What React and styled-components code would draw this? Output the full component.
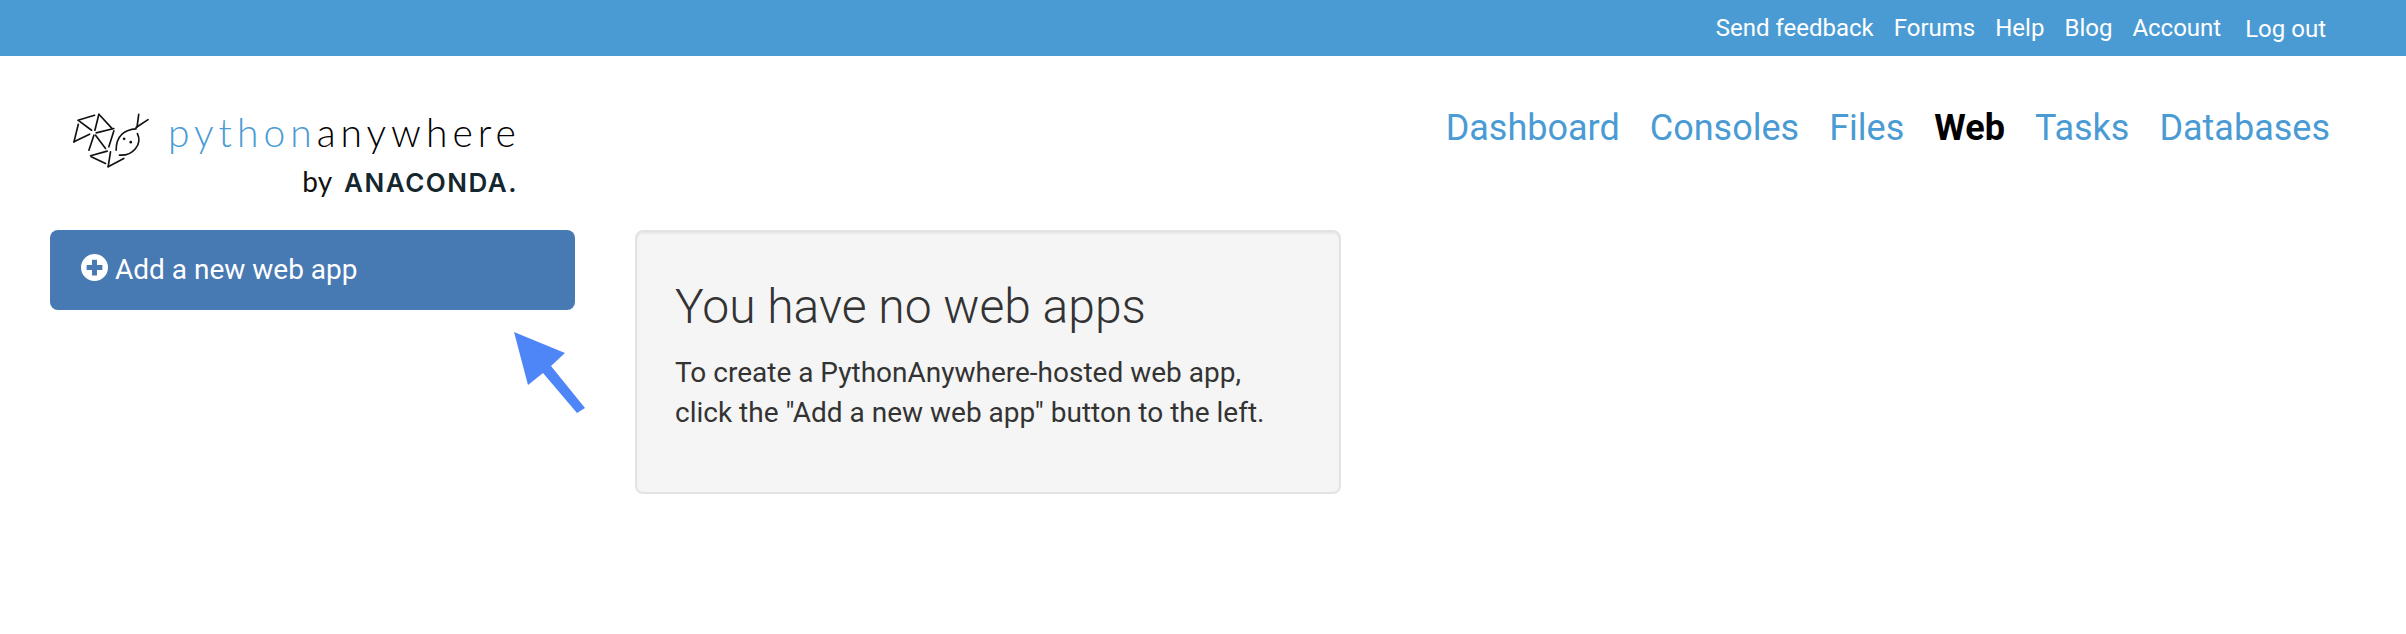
import React from "react";
import styled, {createGlobalStyle} from "styled-components";

const GlobalStyle = createGlobalStyle`
  html, body {
    margin: 0;
    padding: 0;
    background: #fff;
    font-family: Roboto, "Liberation Sans", sans-serif;
    color: #333;
  }
`;

const Page = styled.div`
  position: relative;
  height: 634px;
  overflow: hidden;
`;

const TopBar = styled.div`
  height: 56px;
  background: #4a9bd4;
  display: flex;
  justify-content: flex-end;
  align-items: center;
  padding-right: 80px;
`;

const TopLink = styled.a`
  color: #fff;
  font-size: 24px;
  line-height: 28px;
  margin-left: ${props => props.$gap || 20}px;
  transform: translateY(${props => props.$drop || 0}px);
`;

const Header = styled.div`
  display: flex;
  justify-content: space-between;
  align-items: flex-start;
  height: 174px;
  padding: 0 76px 0 69px;
`;

const Logo = styled.div`
  display: flex;
  flex-direction: column;
  width: 449px;
  padding-top: 51px;
`;

const LogoRow = styled.div`
  display: flex;
  align-items: flex-start;
`;

const LogoIcon = styled.svg`
  width: 83px;
  height: 67px;
  flex: none;
  margin-top: 3px;
`;

const LogoWord = styled.div`
  font-family: Lato, sans-serif;
  font-weight: 300;
  font-size: 39px;
  line-height: 44px;
  letter-spacing: 5px;
  margin: 3px 0 0 16px;
  color: #000;
  white-space: nowrap;

  span {
    color: #4a9bd4;
  }
`;

const LogoBy = styled.div`
  display: flex;
  justify-content: flex-end;
  align-items: baseline;
  gap: 12px;
  margin-top: -12px;
  color: #14262e;
`;

const ByText = styled.span`
  font-family: Lato, sans-serif;
  font-weight: 400;
  font-size: 28px;
  line-height: 32px;
  color: #111;
`;

const Anaconda = styled.span`
  font-family: Inter, sans-serif;
  font-weight: 600;
  font-size: 26px;
  letter-spacing: 1.5px;
  line-height: 32px;
`;

const MainNav = styled.nav`
  display: flex;
  gap: 30px;
  padding-top: 52px;
`;

const NavLink = styled.a`
  font-size: 36px;
  line-height: 40px;
  color: ${props => props.$active ? "#000" : "#4a9bd4"};
  font-weight: ${props => props.$active ? 700 : 400};
`;

const Content = styled.div`
  display: flex;
  align-items: flex-start;
  padding-left: 50px;
`;

const AddButton = styled.a`
  width: 525px;
  height: 80px;
  box-sizing: border-box;
  flex: none;
  background: #4779b3;
  border-radius: 8px;
  display: flex;
  align-items: center;
  padding: 0 31px 2px;
  gap: 7px;
  color: #fff;
  font-size: 28px;
`;

const PlusIcon = styled.svg`
  width: 27px;
  height: 27px;
  flex: none;
  margin-bottom: 3px;
`;

const EmptyCard = styled.div`
  margin-left: 60px;
  width: 706px;
  height: 264px;
  box-sizing: border-box;
  background: #f5f5f5;
  border: 2px solid #e3e3e3;
  border-radius: 8px;
  box-shadow: inset 0 2px 2px rgba(0, 0, 0, 0.05);
  padding: 48px 38px 0;
`;

const EmptyTitle = styled.h3`
  margin: 0 0 20px;
  font-size: 48px;
  line-height: 53px;
  font-weight: 300;
  color: #333;
`;

const EmptyText = styled.p`
  margin: 0;
  font-size: 28px;
  line-height: 40px;
  color: #333;
`;

const Arrow = styled.svg`
  position: absolute;
  left: 510px;
  top: 328px;
  width: 80px;
  height: 90px;
`;

const topLinks = ["Send feedback", "Forums", "Help", "Blog", "Account"];
const navLinks = ["Dashboard", "Consoles", "Files", "Web", "Tasks", "Databases"];

const fishLines = [
    [57, 60, 107, 45], [60, 62, 98, 90], [58, 72, 45, 125], [45, 125, 92, 102],
    [120, 42, 160, 85], [120, 42, 108, 90], [112, 98, 165, 85],
    [105, 105, 90, 150], [110, 105, 140, 145], [165, 92, 150, 140],
    [95, 167, 145, 153], [97, 170, 140, 190], [155, 155, 148, 200], [148, 200, 195, 175],
    [240, 42, 235, 80], [268, 58, 232, 82]
];

export default function App() {
    return (
        <Page>
            <GlobalStyle/>
            <TopBar>
                {topLinks.map(link => <TopLink key={link}>{link}</TopLink>)}
                <TopLink $gap={24} $drop={1}>Log out</TopLink>
            </TopBar>

            <Header>
                <Logo>
                    <LogoRow>
                        <LogoIcon viewBox="30 30 250 200">
                            <g stroke="#111" strokeWidth="5" strokeLinecap="round" fill="none">
                                {fishLines.map(([x1, y1, x2, y2]) => (
                                    <line key={`${x1}-${y1}-${x2}`} x1={x1} y1={y1} x2={x2} y2={y2}/>
                                ))}
                                <path d="M232 86C200 88 172 105 172 150"/>
                                <path d="M236 100C252 132 222 168 182 165"/>
                            </g>
                            <circle cx="196" cy="116" r="4" fill="#111"/>
                            <circle cx="216" cy="126" r="4" fill="#111"/>
                        </LogoIcon>
                        <LogoWord><span>python</span>anywhere</LogoWord>
                    </LogoRow>
                    <LogoBy>
                        <ByText>by</ByText>
                        <Anaconda>ANACONDA.</Anaconda>
                    </LogoBy>
                </Logo>
                <MainNav>
                    {navLinks.map(link => (
                        <NavLink key={link} $active={link === "Web"}>{link}</NavLink>
                    ))}
                </MainNav>
            </Header>

            <Content>
                <AddButton>
                    <PlusIcon viewBox="0 0 24 24">
                        <path
                            fill="#fff"
                            fillRule="evenodd"
                            d="M12 0a12 12 0 1 0 0 24a12 12 0 1 0 0-24zM9.8 5h4.4v4.8H19v4.4h-4.8V19H9.8v-4.8H5V9.8h4.8z"
                        />
                    </PlusIcon>
                    Add a new web app
                </AddButton>
                <EmptyCard>
                    <EmptyTitle>You have no web apps</EmptyTitle>
                    <EmptyText>
                        To create a PythonAnywhere-hosted web app,<br/>
                        click the "Add a new web app" button to the left.
                    </EmptyText>
                </EmptyCard>
            </Content>

            <Arrow viewBox="510 328 80 90">
                <path fill="#4f86f7" d="M514 332L565 353L551 366L585 408L577 413L543 373L528 385Z"/>
            </Arrow>
        </Page>
    );
}
